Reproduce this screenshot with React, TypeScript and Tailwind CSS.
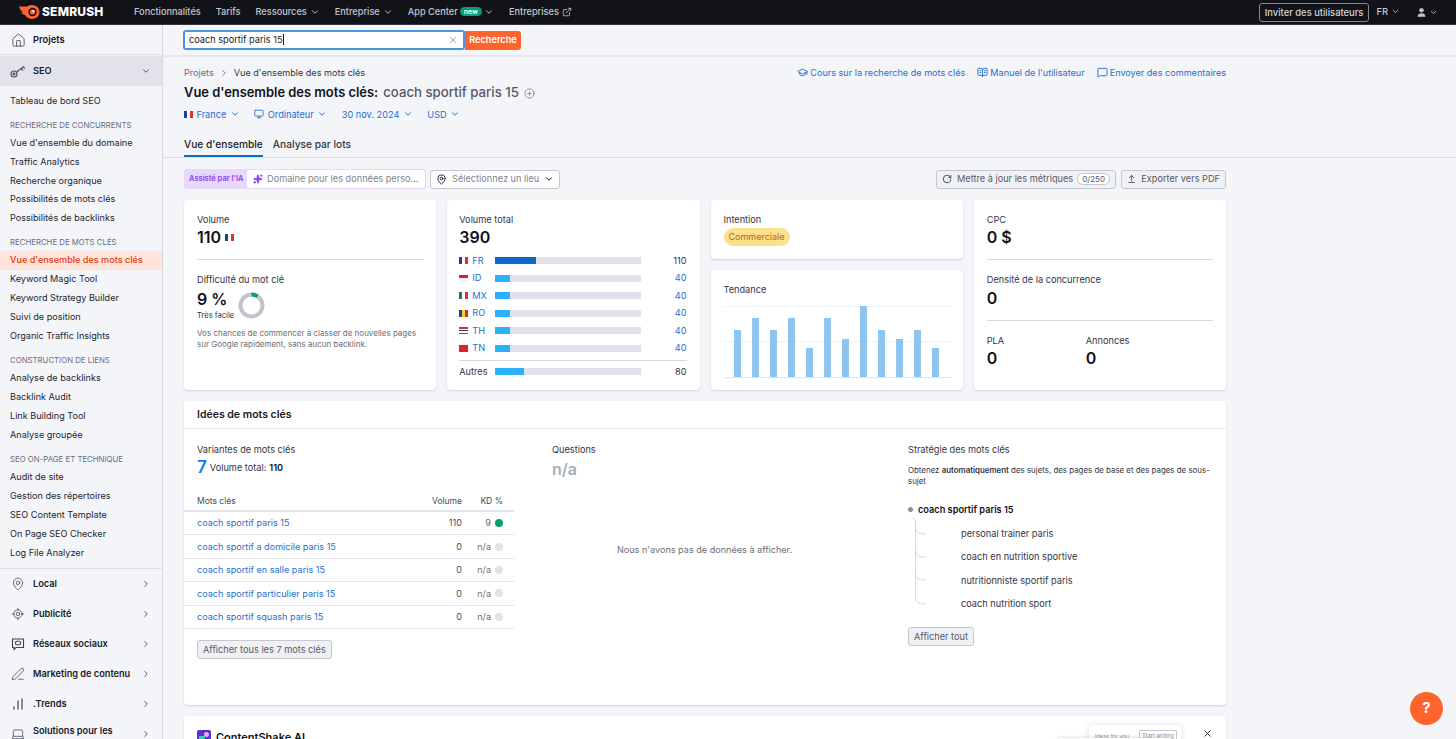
import type { ReactNode } from 'react';
import {
  ArrowUpFromLine, BookOpenText, ChevronDown, ChevronRight, CirclePlus, ExternalLink, GraduationCap,
  Home, Laptop, LocateFixed, MapPin, MessageSquare, Monitor, PenLine, RotateCw, Sparkles, User, X,
} from 'lucide-react';

const sideGroups = [
  { title: 'RECHERCHE DE CONCURRENTS', items: ["Vue d'ensemble du domaine", 'Traffic Analytics', 'Recherche organique', 'Possibilités de mots clés', 'Possibilités de backlinks'] },
  { title: 'RECHERCHE DE MOTS CLÉS', items: ["Vue d'ensemble des mots clés", 'Keyword Magic Tool', 'Keyword Strategy Builder', 'Suivi de position', 'Organic Traffic Insights'] },
  { title: 'CONSTRUCTION DE LIENS', items: ['Analyse de backlinks', 'Backlink Audit', 'Link Building Tool', 'Analyse groupée'] },
  { title: 'SEO ON-PAGE ET TECHNIQUE', items: ['Audit de site', 'Gestion des répertoires', 'SEO Content Template', 'On Page SEO Checker', 'Log File Analyzer'] },
];

const countries = [
  { code: 'FR', value: '110', width: 'w-[41px]', bar: 'bg-[#0a6cc4]', flag: ['#1f3f94', '#ffffff', '#e0303a'], row: true },
  { code: 'ID', value: '40', width: 'w-[15px]', bar: 'bg-[#2bb0fb]', flag: ['#d8232f', '#f4f4f6'], row: false },
  { code: 'MX', value: '40', width: 'w-[15px]', bar: 'bg-[#2bb0fb]', flag: ['#1a7a4c', '#ffffff', '#d0303a'], row: true },
  { code: 'RO', value: '40', width: 'w-[15px]', bar: 'bg-[#2bb0fb]', flag: ['#1f3f94', '#f7cf2e', '#d0303a'], row: true },
  { code: 'TH', value: '40', width: 'w-[15px]', bar: 'bg-[#2bb0fb]', flag: ['#d0303a', '#ffffff', '#24306e', '#ffffff', '#d0303a'], row: false },
  { code: 'TN', value: '40', width: 'w-[15px]', bar: 'bg-[#2bb0fb]', flag: ['#e0202c'], row: false },
];

const keywords = [
  { name: 'coach sportif paris 15', vol: '110', kd: '9', good: true },
  { name: 'coach sportif a domicile paris 15', vol: '0', kd: 'n/a', good: false },
  { name: 'coach sportif en salle paris 15', vol: '0', kd: 'n/a', good: false },
  { name: 'coach sportif particulier paris 15', vol: '0', kd: 'n/a', good: false },
  { name: 'coach sportif squash paris 15', vol: '0', kd: 'n/a', good: false },
];

const trend = [47, 59, 47, 59, 29, 59, 38, 71, 47, 38, 47, 29];
const ideas = ['personal trainer paris', 'coach en nutrition sportive', 'nutritionniste sportif paris', 'coach nutrition sport'];

const Flag = ({ colors, row }: { colors: string[]; row: boolean }) => (
  <span className={`flex h-[7px] w-[9px] shrink-0 overflow-hidden ${row ? 'flex-row' : 'flex-col'}`}>
    {colors.map((c, i) => (
      <span key={i} className="flex-1" style={{ backgroundColor: c }} />
    ))}
  </span>
);

const TopLink = ({ label, caret }: { label: string; caret?: boolean }) => (
  <span className="flex items-center gap-[3px] text-[9.2px] font-medium text-[#c4c7cf]">
    {label}
    {caret && <ChevronDown size={10} strokeWidth={2.2} />}
  </span>
);

const SideMain = ({ icon, label, two }: { icon: ReactNode; label: string; two?: boolean }) => (
  <div className="flex h-[30px] shrink-0 items-center pl-[11px] pr-[11px]">
    <span className="flex w-[22px] shrink-0 text-[#3f4250]">{icon}</span>
    <span className={`flex-1 text-[9.2px] font-semibold leading-[14px] text-[#191b23] ${two ? 'pt-[8px]' : ''}`}>{label}</span>
    <ChevronRight size={10} strokeWidth={2.2} className="shrink-0 text-[#4a4d5a]" />
  </div>
);

const Select = ({ children }: { children: ReactNode }) => (
  <span className="flex items-center gap-[3.5px] text-[9.2px] text-[#1f6fd0]">
    {children}
    <ChevronDown size={10} strokeWidth={2.4} />
  </span>
);

const Card = ({ children, className = '' }: { children: ReactNode; className?: string }) => (
  <div className={`rounded-[4px] bg-white shadow-[0_1px_2px_rgba(30,34,60,0.16)] ${className}`}>{children}</div>
);

const Label = ({ children }: { children: ReactNode }) => (
  <div className="text-[9.2px] leading-[13px] text-[#33353f]">{children}</div>
);

const Big = ({ children }: { children: ReactNode }) => (
  <div className="text-[16px] font-semibold leading-[22px] text-[#111218]">{children}</div>
);

const GreyBtn = ({ children, className = '' }: { children: ReactNode; className?: string }) => (
  <span className={`flex h-[19px] items-center whitespace-nowrap rounded-[3px] border border-[#c4c7cf] bg-[#f0f1f5] px-[5px] text-[9.2px] text-[#575a66] ${className}`}>
    {children}
  </span>
);

const Logo = () => (
  <svg width="22" height="14" viewBox="0 0 22 14" fill="none">
    <path d="M1 1.500h8.200C10.600.500 12.200 0 14 0c4.200 0 7.500 3 7.500 7s-3.300 7-7.500 7c-3.200 0-5.800-1.600-7-4.200C5.200 9.600 3.700 8.800 3 7.500h2.600C3.800 6.800 2 4.800 1 1.500z" fill="#ff642d" />
    <circle cx="14.500" cy="7" r="4.200" fill="#121319" />
    <circle cx="14.500" cy="7" r="2.600" fill="#ff642d" />
    <circle cx="15.300" cy="6.200" r="1.100" fill="#ffffff" />
  </svg>
);

export default function App() {
  return (
    <div className="flex h-screen flex-col overflow-hidden bg-[#f4f5f9] font-[Inter,sans-serif] text-[#191b23]">
      {/* top bar */}
      <header className="flex h-[25px] shrink-0 items-center border-b border-[#33343c] bg-[#121319] pl-[18px] pr-[18px]">
        <Logo />
        <span className="ml-[2px] w-[92px] text-[12px] font-extrabold tracking-[0.2px] text-white">SEMRUSH</span>
        <div className="flex items-center gap-[15px]">
          <TopLink label="Fonctionnalités" />
          <TopLink label="Tarifs" />
          <TopLink label="Ressources" caret />
          <TopLink label="Entreprise" caret />
          <span className="flex items-center gap-[2px] text-[9.2px] font-medium text-[#c4c7cf]">
            App Center
            <span className="rounded-full bg-[#0d9b76] px-[4px] text-[7px] font-semibold leading-[9px] text-white">new</span>
            <ChevronDown size={10} strokeWidth={2.2} />
          </span>
          <span className="flex items-center gap-[3px] text-[9.2px] font-medium text-[#c4c7cf]">
            Entreprises
            <ExternalLink size={10} />
          </span>
        </div>
        <div className="ml-auto flex items-center">
          <span className="rounded-[3px] border border-[#85878f] px-[5px] text-[9.4px] font-medium leading-[17px] text-[#d4d6dc]">Inviter des utilisateurs</span>
          <span className="ml-[7px] flex items-center gap-[3px] text-[9.4px] font-medium text-[#c4c7cf]">
            FR
            <ChevronDown size={9} strokeWidth={2.2} />
          </span>
          <span className="ml-[16px] flex items-center gap-[2px] text-[#c4c7cf]">
            <User size={11} fill="#c4c7cf" />
            <ChevronDown size={9} strokeWidth={2.2} />
          </span>
        </div>
      </header>

      <div className="flex min-h-0 flex-1">
        {/* sidebar */}
        <aside className="flex w-[163px] shrink-0 flex-col overflow-hidden border-r border-[#d6d8e0]">
          <div className="flex h-[30px] shrink-0 items-center border-b border-[#e0e1e9] pl-[11px] pt-[2px]">
            <Home size={15} strokeWidth={1.3} className="mr-[7px] text-[#3f4250]" />
            <span className="text-[9.4px] font-semibold">Projets</span>
          </div>
          <div className="mt-px flex h-[30px] shrink-0 items-center bg-[#e1e2ea] pl-[10px] pr-[11px]">
            <svg width="17" height="14" viewBox="0 0 17 14" fill="none" stroke="#4a4d5a" strokeWidth="1.1" className="mr-[6px]">
              <circle cx="4" cy="10" r="3" />
              <circle cx="4" cy="10" r="0.9" />
              <path d="M6.500 8 14 2.500M11 4.500l2 2M13.500 2.800l1.500 1.500" />
            </svg>
            <span className="flex-1 text-[9.2px] font-semibold">SEO</span>
            <ChevronDown size={10} strokeWidth={2.2} className="text-[#4a4d5a]" />
          </div>
          <div className="mt-[5px] flex h-[19px] shrink-0 items-center pl-[10px] text-[9.1px] text-[#24262f]">Tableau de bord SEO</div>
          {sideGroups.map((g) => (
            <div key={g.title} className="mt-[6px] shrink-0">
              <div className="flex h-[17px] items-center pl-[10px] pt-[2px] text-[7.8px] text-[#6c6e79]">{g.title}</div>
              {g.items.map((it) =>
                it === "Vue d'ensemble des mots clés" ? (
                  <div key={it} className="flex h-[18.95px] items-center bg-[#ffe4d9] pl-[10px] text-[9.1px] font-medium text-[#e5380c]">
                    {it}
                  </div>
                ) : (
                  <div key={it} className="flex h-[18.95px] items-center pl-[10px] text-[9.1px] text-[#24262f]">
                    {it}
                  </div>
                ),
              )}
            </div>
          ))}
          <div className="mt-[6px] h-px shrink-0 bg-[#e0e1e9]" />
          <SideMain icon={<MapPin size={14} strokeWidth={1.3} />} label="Local" />
          <SideMain icon={<LocateFixed size={14} strokeWidth={1.3} />} label="Publicité" />
          <SideMain
            icon={
              <svg width="14" height="14" viewBox="0 0 14 14" fill="none" stroke="currentColor" strokeWidth="1.1">
                <path d="M1.500 2h11v8.500H5L3 12.500v-2H1.500z" />
                <rect x="4.500" y="4.200" width="5" height="3.500" rx="1.200" />
              </svg>
            }
            label="Réseaux sociaux"
          />
          <SideMain icon={<PenLine size={14} strokeWidth={1.3} />} label="Marketing de contenu" />
          <SideMain
            icon={
              <svg width="14" height="14" viewBox="0 0 14 14" fill="none" stroke="currentColor" strokeWidth="1.2">
                <path d="M3 9.500v3M7 3.500v9M11 1.500v11" />
              </svg>
            }
            label=".Trends"
          />
          <SideMain icon={<Laptop size={14} strokeWidth={1.3} />} label="Solutions pour les agences" two />
        </aside>

        <main className="relative flex min-w-0 flex-1 flex-col overflow-hidden">
          {/* search */}
          <div className="flex h-[32px] shrink-0 items-center border-b-2 border-[#e6e7ed] pl-[20px]">
            <div className="flex h-[20px] w-[282px] items-center rounded-[3px] border-2 border-[#4c94e8] bg-white pl-[4px] pr-[5px]">
              <span className="flex-1 text-[9.2px] text-[#191b23]">coach sportif paris 15<span className="border-l border-[#191b23]" /></span>
              <X size={10} className="text-[#8a8d98]" />
            </div>
            <span className="flex h-[19px] w-[56px] items-center justify-center rounded-r-[3px] bg-[#ff642d] text-[9.2px] font-semibold text-white">Recherche</span>
          </div>

          <div className="w-[1063px] pl-[21px]">
            {/* breadcrumb and help links */}
            <div className="mt-[8px] flex h-[15px] items-center text-[9.1px]">
              <span className="text-[#6c6e79]">Projets</span>
              <ChevronRight size={10} className="mx-[5px] text-[#6c6e79]" />
              <span className="text-[#33353f]">Vue d'ensemble des mots clés</span>
              <div className="ml-auto flex items-center gap-[12px] text-[#1f6fd0]">
                <span className="flex items-center gap-[2px]"><GraduationCap size={11} />Cours sur la recherche de mots clés</span>
                <span className="flex items-center gap-[2px]"><BookOpenText size={11} />Manuel de l'utilisateur</span>
                <span className="flex items-center gap-[2px]"><MessageSquare size={11} />Envoyer des commentaires</span>
              </div>
            </div>
            <div className="mt-[2px] flex h-[22px] items-center">
              <span className="text-[12.9px] font-semibold text-[#111218]">Vue d'ensemble des mots clés:</span>
              <span className="ml-[5px] text-[13.2px] font-medium text-[#565964]">coach sportif paris 15</span>
              <CirclePlus size={11} className="ml-[5px] text-[#8a8d98]" />
            </div>
            <div className="mt-[3px] flex h-[15px] items-center gap-[14.5px]">
              <Select><Flag colors={['#1f3f94', '#ffffff', '#e0303a']} row />France</Select>
              <Select><Monitor size={10} />Ordinateur</Select>
              <Select>30 nov. 2024</Select>
              <Select>USD</Select>
            </div>
            {/* tabs */}
            <div className="mt-[15px] flex h-[20px] items-start gap-[10px] text-[10.2px] font-medium">
              <span className="h-[20px] border-b-2 border-[#0a6cc4] text-[#191b23]">Vue d'ensemble</span>
              <span className="text-[#33353f]">Analyse par lots</span>
            </div>
          </div>
          <div className="h-px shrink-0 bg-[#dcdde4]" />

          <div className="w-[1063px] pl-[21px]">
            {/* toolbar */}
            <div className="mt-[11px] flex h-[20px] items-center">
              <span className="flex h-[20px] w-[242px] items-center whitespace-nowrap rounded-[3px] bg-[#e8d8fb] pl-[5px] pr-px text-[7.5px] font-semibold text-[#8a3ff0]">
                Assisté par l'IA
                <span className="ml-auto flex h-[18px] w-[178px] items-center gap-[4px] rounded-[3px] bg-white px-[6px] text-[9.2px] font-normal text-[#82858f]">
                  <Sparkles size={10} className="text-[#8a3ff0]" fill="#8a3ff0" />
                  Domaine pour les données perso...
                </span>
              </span>
              <span className="ml-[4px] flex h-[19px] w-[130px] items-center whitespace-nowrap rounded-[3px] border border-[#c4c7cf] bg-white pl-[5px] pr-[5px] text-[9.2px] text-[#82858f]">
                <MapPin size={11} className="mr-[5px] text-[#191b23]" />
                <span className="flex-1">Sélectionnez un lieu</span>
                <ChevronDown size={10} strokeWidth={2.4} className="text-[#191b23]" />
              </span>
              <div className="ml-auto flex items-center gap-[5px]">
                <GreyBtn className="w-[180px]">
                  <RotateCw size={10} className="mr-[5px] text-[#33353f]" />
                  Mettre à jour les métriques
                  <span className="ml-auto rounded-full border border-[#c4c7cf] bg-white px-[4px] text-[8px] leading-[10px]">0/250</span>
                </GreyBtn>
                <GreyBtn className="w-[105px]">
                  <ArrowUpFromLine size={10} className="mr-[5px] text-[#33353f]" />
                  Exporter vers PDF
                </GreyBtn>
              </div>
            </div>

            {/* metric cards */}
            <div className="mt-[11px] grid h-[190px] grid-cols-4 gap-[11px]">
              <Card className="pl-[13px] pr-[12px] pt-[13px]">
                <Label>Volume</Label>
                <div className="flex items-center gap-[4px]"><Big>110</Big><Flag colors={['#1f3f94', '#ffffff', '#e0303a']} row /></div>
                <div className="mt-[11px] h-px bg-[#d6d8e0]" />
                <div className="mt-[13px]"><Label>Difficulté du mot clé</Label></div>
                <div className="mt-[2px] flex items-start gap-[4px]">
                  <div>
                    <Big>9 %</Big>
                    <div className="text-[7.6px] leading-[11px] text-[#33353f]">Très facile</div>
                  </div>
                  <svg width="27" height="27" viewBox="0 0 27 27" fill="none" className="mt-[4px]">
                    <circle cx="13.5" cy="13.5" r="11" stroke="#c1c4cd" strokeWidth="4" />
                    <path d="M13.500 2.500a11 11 0 0 1 6 1.800" stroke="#0d9b76" strokeWidth="4" />
                  </svg>
                </div>
                <p className="mt-[7px] text-[8px] leading-[11px] text-[#6c6e79]">
                  Vos chances de commencer à classer de nouvelles pages sur Google rapidement, sans aucun backlink.
                </p>
              </Card>

              <Card className="pl-[12px] pr-[13px] pt-[13px]">
                <Label>Volume total</Label>
                <Big>390</Big>
                <div className="mt-[4px]">
                  {countries.map((c) => (
                    <div key={c.code} className="flex h-[17.5px] items-center text-[9.2px]">
                      <Flag colors={c.flag} row={c.row} />
                      <span className="ml-[4px] w-[23px] text-[#1f6fd0]">{c.code}</span>
                      <div className="h-[7px] w-[146px] bg-[#e0e1e9]">
                        <div className={`h-full ${c.width} ${c.bar}`} />
                      </div>
                      <span className={`ml-auto ${c.value === '110' ? 'text-[#33353f]' : 'text-[#1f6fd0]'}`}>{c.value}</span>
                    </div>
                  ))}
                  <div className="mt-[3px] flex h-[22px] items-center border-t border-[#d6d8e0] text-[9.2px] text-[#33353f]">
                    <span className="w-[36px]">Autres</span>
                    <div className="h-[7px] w-[146px] bg-[#e0e1e9]">
                      <div className="h-full w-[29px] bg-[#2bb0fb]" />
                    </div>
                    <span className="ml-auto">80</span>
                  </div>
                </div>
              </Card>

              <div className="flex flex-col gap-[11px]">
                <Card className="h-[59px] px-[13px] pt-[13px]">
                  <Label>Intention</Label>
                  <span className="mt-[2px] block w-fit rounded-full bg-[#fde08a] px-[5px] text-[9px] leading-[18px] text-[#b5651d]">Commerciale</span>
                </Card>
                <Card className="flex-1 pl-[13px] pt-[13px]">
                  <Label>Tendance</Label>
                  <div className="mt-[10px] h-[72px] w-[227px] border-b border-[#e0e1e9] bg-[linear-gradient(#f0f1f5,#f0f1f5),linear-gradient(#f0f1f5,#f0f1f5)] bg-[length:100%_1px] bg-[position:0_0,0_35px] bg-no-repeat pl-[10px] pr-[12px]">
                    <div className="flex h-full items-end justify-between">
                      {trend.map((h, i) => (
                        <div key={i} className="w-[7px] bg-[#8ec5f0]" style={{ height: h }} />
                      ))}
                    </div>
                  </div>
                </Card>
              </div>

              <Card className="px-[13px] pt-[13px]">
                <Label>CPC</Label>
                <Big>0 $</Big>
                <div className="mt-[11px] h-px bg-[#d6d8e0]" />
                <div className="mt-[13px]"><Label>Densité de la concurrence</Label></div>
                <div className="mt-px"><Big>0</Big></div>
                <div className="mt-[11px] h-px bg-[#d6d8e0]" />
                <div className="mt-[13px] flex">
                  <div className="w-[99px]"><Label>PLA</Label><Big>0</Big></div>
                  <div><Label>Annonces</Label><Big>0</Big></div>
                </div>
              </Card>
            </div>

            {/* keyword ideas */}
            <Card className="mt-[11px] h-[304px]">
              <div className="flex h-[28px] items-center border-b border-[#e6e7ed] px-[13px] text-[10.5px] font-semibold text-[#191b23]">Idées de mots clés</div>
              <div className="flex">
                <div className="w-[330px] shrink-0 pt-[14px]">
                  <div className="pl-[13px]">
                    <Label>Variantes de mots clés</Label>
                    <div className="mt-[2px] flex h-[20px] items-center gap-[3px] text-[9.2px] text-[#33353f]">
                      <span className="text-[17px] font-semibold text-[#0a7be8]">7</span>
                      Volume total: <b className="font-semibold text-[#111218]">110</b>
                    </div>
                  </div>
                  <div className="mt-[15px] flex h-[19px] items-center border-b-2 border-[#e0e1e9] pl-[13px] pr-[11px] text-[8.5px] text-[#484b57]">
                    <span className="flex-1">Mots clés</span>
                    <span className="w-[40px] text-right">Volume</span>
                    <span className="w-[41px] text-right">KD %</span>
                  </div>
                  {keywords.map((k) => (
                    <div key={k.name} className="flex h-[23.4px] items-center border-b border-[#e6e7ed] pl-[13px] pr-[11px] text-[9.1px]">
                      <span className="flex-1 text-[#1f6fd0]">{k.name}</span>
                      <span className="w-[40px] text-right text-[#484b57]">{k.vol}</span>
                      <span className="w-[29px] text-right text-[#6c6e79]">{k.kd}</span>
                      <span className={`ml-[4px] h-[8px] w-[8px] rounded-full ${k.good ? 'bg-[#0d9b76]' : 'bg-[#e0e1e9]'}`} />
                    </div>
                  ))}
                  <GreyBtn className="ml-[13px] mt-[11px] w-fit">Afficher tous les 7 mots clés</GreyBtn>
                </div>

                <div className="ml-[38px] flex w-[305px] shrink-0 flex-col pt-[14px]">
                  <Label>Questions</Label>
                  <div className="mt-[2px] text-[16px] font-semibold leading-[22px] text-[#a9acb6]">n/a</div>
                  <div className="mt-[63px] text-center text-[9.1px] text-[#6c6e79]">Nous n'avons pas de données à afficher.</div>
                </div>

                <div className="ml-[51px] w-[305px] shrink-0 pt-[14px]">
                  <Label>Stratégie des mots clés</Label>
                  <p className="mt-[9px] text-[7.9px] leading-[11px] text-[#33353f]">
                    Obtenez <b className="font-semibold">automatiquement</b> des sujets, des pages de base et des pages de sous-sujet
                  </p>
                  <div className="mt-[16px] flex items-center text-[9.2px] font-semibold text-[#111218]">
                    <span className="mr-[5px] h-[5px] w-[5px] rounded-full bg-[#8a8d98]" />
                    coach sportif paris 15
                  </div>
                  <div className="flex">
                    <svg width="53" height="92" viewBox="0 0 53 92" fill="none" stroke="#d6d8e0" strokeWidth="1" className="shrink-0">
                      <path d="M3 0c3 1 4.600 3 4.600 6v74c0 5 2 7 10.400 7M7.600 10c0 5 2 7 10.400 7M7.600 33c0 5 2 7 10.400 7M7.600 56c0 5 2 7 10.400 7" />
                    </svg>
                    <div className="pt-[5px]">
                      {ideas.map((t) => (
                        <div key={t} className="h-[23.4px] text-[9.2px] leading-[23.4px] text-[#33353f]">{t}</div>
                      ))}
                    </div>
                  </div>
                  <GreyBtn className="mt-[12px] w-fit">Afficher tout</GreyBtn>
                </div>
              </div>
            </Card>

            {/* content shake promo */}
            <Card className="relative mt-[11px] flex h-[60px] items-start px-[13px] pt-[14px]">
              <span className="relative h-[14px] w-[14px] rounded-[2px] bg-[#5a2fd0]">
                <span className="absolute left-[2px] top-[6px] h-[6px] w-[6px] rounded-[1px] bg-[#35d0b0]" />
                <span className="absolute right-[2px] top-[2px] h-[5px] w-[5px] rounded-full bg-[#f0a8e8]" />
              </span>
              <span className="ml-[5px] text-[11px] font-semibold leading-[14px] text-[#111218]">ContentShake AI</span>
              <div className="ml-auto mr-[32px] flex h-[40px] w-[92px] -translate-y-[5px] items-start rounded-[4px] bg-white py-[5px] pl-[6px] pr-[4px] text-[5.5px] text-[#8a8d98] shadow-[0_1px_6px_rgba(30,34,60,0.16)]">
                <span className="mt-[3px] flex-1 whitespace-nowrap">Ideas for you</span>
                <span className="whitespace-nowrap rounded-[1px] border border-[#c4c7cf] px-[2px] py-[1px]">Start writing</span>
              </div>
              <span className="absolute left-[873px] top-[22px] h-[20px] w-[110px] rounded-[4px] bg-white shadow-[0_-1px_3px_rgba(30,34,60,0.12)]" />
              <X size={11} strokeWidth={2} className="absolute right-[13px] top-[12px] text-[#191b23]" />
            </Card>
          </div>

          <span className="absolute left-[1247px] top-[667px] flex h-[33px] w-[33px] items-center justify-center rounded-full bg-[#ff642d] text-[15px] font-bold text-white">?</span>
        </main>
      </div>
    </div>
  );
}
